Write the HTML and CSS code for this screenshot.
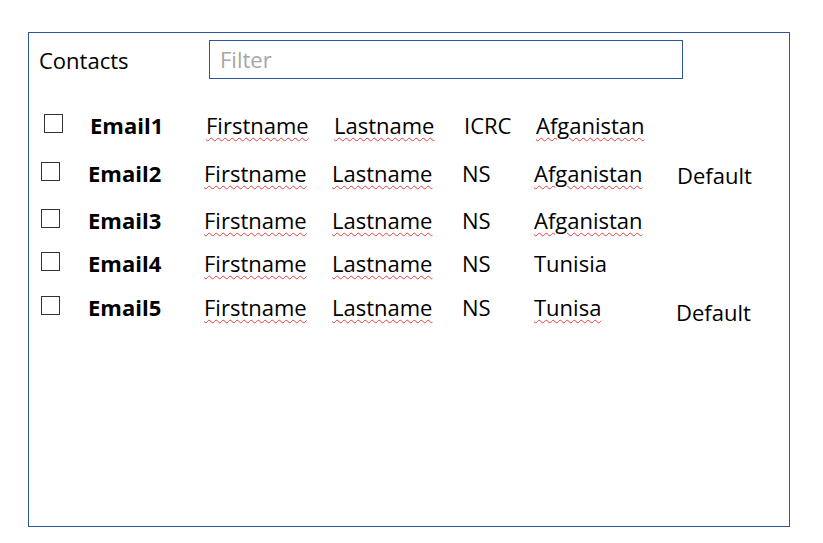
FILE: index.html
```html
<!DOCTYPE html>
<html lang="en">
<head>
<meta charset="utf-8">
<title>Contacts</title>
<link rel="stylesheet" href="styles.css">
</head>
<body>
<div class="frame">
  <div class="header">
    <div class="title">Contacts</div>
    <div class="filter">Filter</div>
  </div>
  <div class="list">
    <div class="row row-first gap-5">
      <span class="check"></span>
      <span class="email">Email1</span>
      <span class="spell">Firstname</span>
      <span class="spell">Lastname</span>
      <span>ICRC</span>
      <span class="spell">Afganistan</span>
      <span></span>
    </div>
    <div class="row gap-4">
      <span class="check"></span>
      <span class="email">Email2</span>
      <span class="spell">Firstname</span>
      <span class="spell">Lastname</span>
      <span>NS</span>
      <span class="spell">Afganistan</span>
      <span class="default">Default</span>
    </div>
    <div class="row">
      <span class="check"></span>
      <span class="email">Email3</span>
      <span class="spell">Firstname</span>
      <span class="spell">Lastname</span>
      <span>NS</span>
      <span class="spell">Afganistan</span>
      <span></span>
    </div>
    <div class="row gap-1">
      <span class="check"></span>
      <span class="email">Email4</span>
      <span class="spell">Firstname</span>
      <span class="spell">Lastname</span>
      <span>NS</span>
      <span>Tunisia</span>
      <span></span>
    </div>
    <div class="row">
      <span class="check"></span>
      <span class="email">Email5</span>
      <span class="spell">Firstname</span>
      <span class="spell">Lastname</span>
      <span>NS</span>
      <span class="spell">Tunisa</span>
      <span class="default default-low">Default</span>
    </div>
  </div>
</div>
</body>
</html>
```

FILE: styles.css
```css
html, body {
  margin: 0;
  padding: 0;
  background: #ffffff;
}

body {
  font-family: "Open Sans", "Noto Sans", sans-serif;
  font-size: 22px;
  color: #000000;
}

.frame {
  box-sizing: border-box;
  width: 762px;
  height: 495px;
  margin: 32px 0 0 28px;
  border: 1px solid #2f5597;
}

.header {
  display: flex;
  align-items: flex-start;
  padding: 7px 0 0 10px;
}

.title {
  width: 170px;
  line-height: 30px;
  padding-top: 5px;
}

.filter {
  box-sizing: border-box;
  width: 474px;
  height: 39px;
  border: 1px solid #2f5597;
  padding-left: 10px;
  line-height: 36px;
  color: #a6a6a6;
}

.list {
  display: flex;
  flex-direction: column;
  gap: 13px;
  margin-top: 31px;
  padding-left: 12px;
}

.row {
  display: grid;
  grid-template-columns: 47px 116px 128px 130px 72px 143px auto;
  grid-template-rows: 30px;
  align-items: center;
  height: 30px;
  line-height: 30px;
  white-space: nowrap;
}

.row-first {
  padding-left: 2px;
}

.row-first .check {
  margin-left: 1px;
}

.gap-5 { margin-bottom: 5px; }
.gap-4 { margin-bottom: 4px; }
.gap-1 { margin-bottom: 1px; }

.check {
  box-sizing: border-box;
  width: 19px;
  height: 19px;
  border: 1px solid #333333;
  margin-bottom: 3px;
}

.email {
  font-weight: 700;
}

.spell {
  text-decoration: underline wavy #e8413f;
  text-decoration-thickness: 1px;
  text-underline-offset: 3px;
}

.default {
  padding-top: 4px;
}

.default-low {
  padding-top: 10px;
  margin-left: -1px;
}
```
